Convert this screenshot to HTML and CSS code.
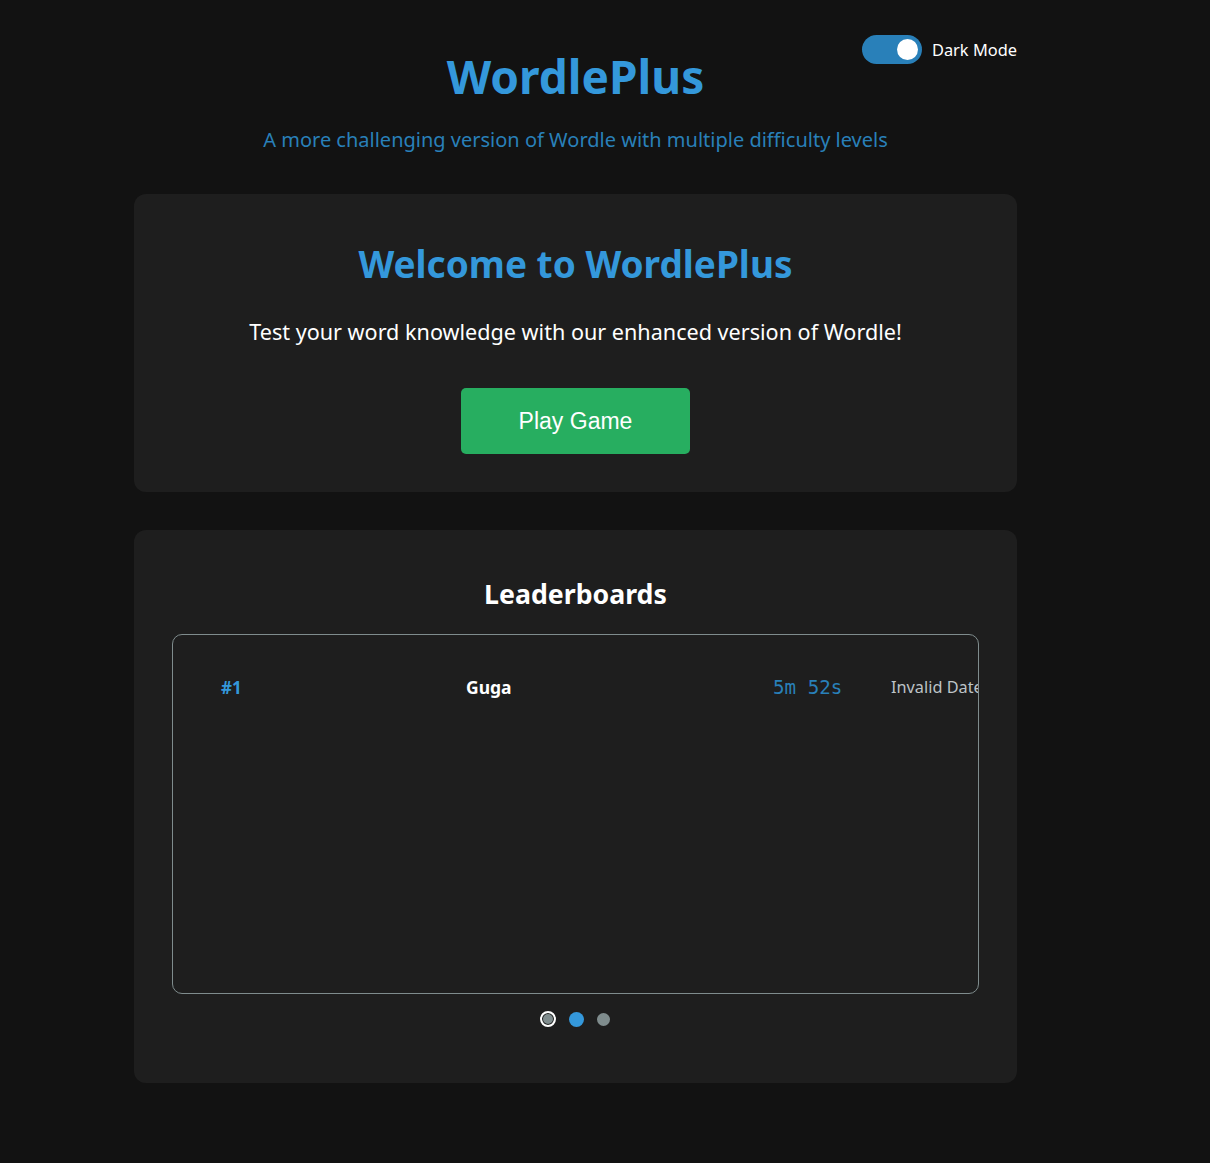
FILE: index.html
```html
<!DOCTYPE html>
<html lang="en">
<head>
<meta charset="utf-8">
<title>WordlePlus</title>
<link rel="stylesheet" href="styles.css">
</head>
<body>
<div class="page">
  <div class="app">
    <header class="header">
      <label class="theme-toggle">
        <span class="switch"><span class="knob"></span></span>
        <span class="toggle-label">Dark Mode</span>
      </label>
      <h1 class="title">WordlePlus</h1>
      <p class="subtitle">A more challenging version of Wordle with multiple difficulty levels</p>
    </header>

    <section class="card welcome">
      <h2 class="welcome-title">Welcome to WordlePlus</h2>
      <p class="welcome-text">Test your word knowledge with our enhanced version of Wordle!</p>
      <button class="play-btn">Play Game</button>
    </section>

    <section class="card boards">
      <h3 class="boards-title">Leaderboards</h3>
      <div class="board">
        <div class="board-row">
          <span class="rank">#1</span>
          <span class="name">Guga</span>
          <span class="time">5m 52s</span>
          <span class="date">Invalid Date</span>
        </div>
      </div>
      <div class="dots">
        <span class="dot dot-ring"></span>
        <span class="dot dot-active"></span>
        <span class="dot"></span>
      </div>
    </section>
  </div>
</div>
</body>
</html>
```

FILE: styles.css
```css
* { box-sizing: border-box; }
html, body { margin: 0; padding: 0; }
body {
  background: #121212;
  color: #f0f0f0;
  font-family: "Noto Sans", "Open Sans", sans-serif;
  height: 1163px;
  overflow: hidden;
}
.page { width: 1151px; }
.app {
  width: 883px;
  margin: 0 auto;
  padding-top: 40px;
}
.header {
  position: relative;
  text-align: center;
}
.theme-toggle {
  position: absolute;
  right: 0;
  top: -5px;
  display: flex;
  align-items: center;
  gap: 10px;
}
.switch {
  width: 60px;
  height: 29px;
  border-radius: 15px;
  background: #2980b9;
  position: relative;
  display: block;
}
.knob {
  position: absolute;
  right: 4px;
  top: 4px;
  width: 21px;
  height: 21px;
  border-radius: 50%;
  background: #fff;
}
.toggle-label {
  font-size: 16.4px;
  color: #fff;
}
.title {
  margin: 0;
  font-size: 46px;
  font-weight: 700;
  color: #3498db;
  line-height: 72px;
}
.subtitle {
  margin: 14px 0 0;
  font-size: 20px;
  color: #2980b9;
  line-height: 28px;
}
.card {
  background: #1e1e1e;
  border-radius: 12px;
  text-align: center;
}
.welcome {
  margin-top: 40px;
  padding: 40px 40px 38px;
  height: 298px;
}
.welcome-title {
  margin: 0;
  font-size: 37px;
  font-weight: 700;
  color: #3498db;
  line-height: 60px;
}
.welcome-text {
  margin: 23px 0 0;
  font-size: 21.6px;
  color: #fff;
  line-height: 30px;
}
.play-btn {
  margin-top: 41px;
  width: 229px;
  height: 66px;
  border: none;
  border-radius: 5px;
  background: #27ae60;
  color: #fff;
  font-family: "Liberation Sans", Arial, sans-serif;
  font-size: 23px;
  vertical-align: top;
}
.boards {
  margin-top: 38px;
  height: 553px;
  padding: 44px 38px 0;
}
.boards-title {
  margin: 0;
  font-size: 26.7px;
  font-weight: 700;
  color: #fff;
  line-height: 40px;
}
.board {
  margin-top: 20px;
  height: 360px;
  border: 1px solid #7f8c8d;
  border-radius: 10px;
  overflow: hidden;
}
.board-row {
  display: flex;
  align-items: center;
  height: 104px;
  padding-left: 48px;
  white-space: nowrap;
  text-align: left;
}
.board-row > span { flex-shrink: 0; }
.rank {
  width: 245px;
  color: #3498db;
  font-weight: 700;
  font-size: 17px;
}
.name {
  width: 307px;
  font-weight: 700;
  font-size: 17.5px;
  color: #fff;
}
.time {
  width: 118px;
  font-family: "DejaVu Sans Mono", "Liberation Mono", monospace;
  font-size: 19.2px;
  color: #2980b9;
}
.date {
  font-size: 16.3px;
  color: #bdc3c7;
}
.dots {
  display: flex;
  justify-content: center;
  align-items: center;
  gap: 13px;
  margin-top: 17px;
  padding-right: 2px;
}
.dot {
  width: 13px;
  height: 13px;
  border-radius: 50%;
  background: #7f8c8d;
}
.dot-active {
  width: 15px;
  height: 15px;
  background: #3498db;
}
.dot-ring {
  width: 16px;
  height: 16px;
  border: 2px solid #fff;
  box-shadow: inset 0 0 0 1px #1e1e1e;
}
```
